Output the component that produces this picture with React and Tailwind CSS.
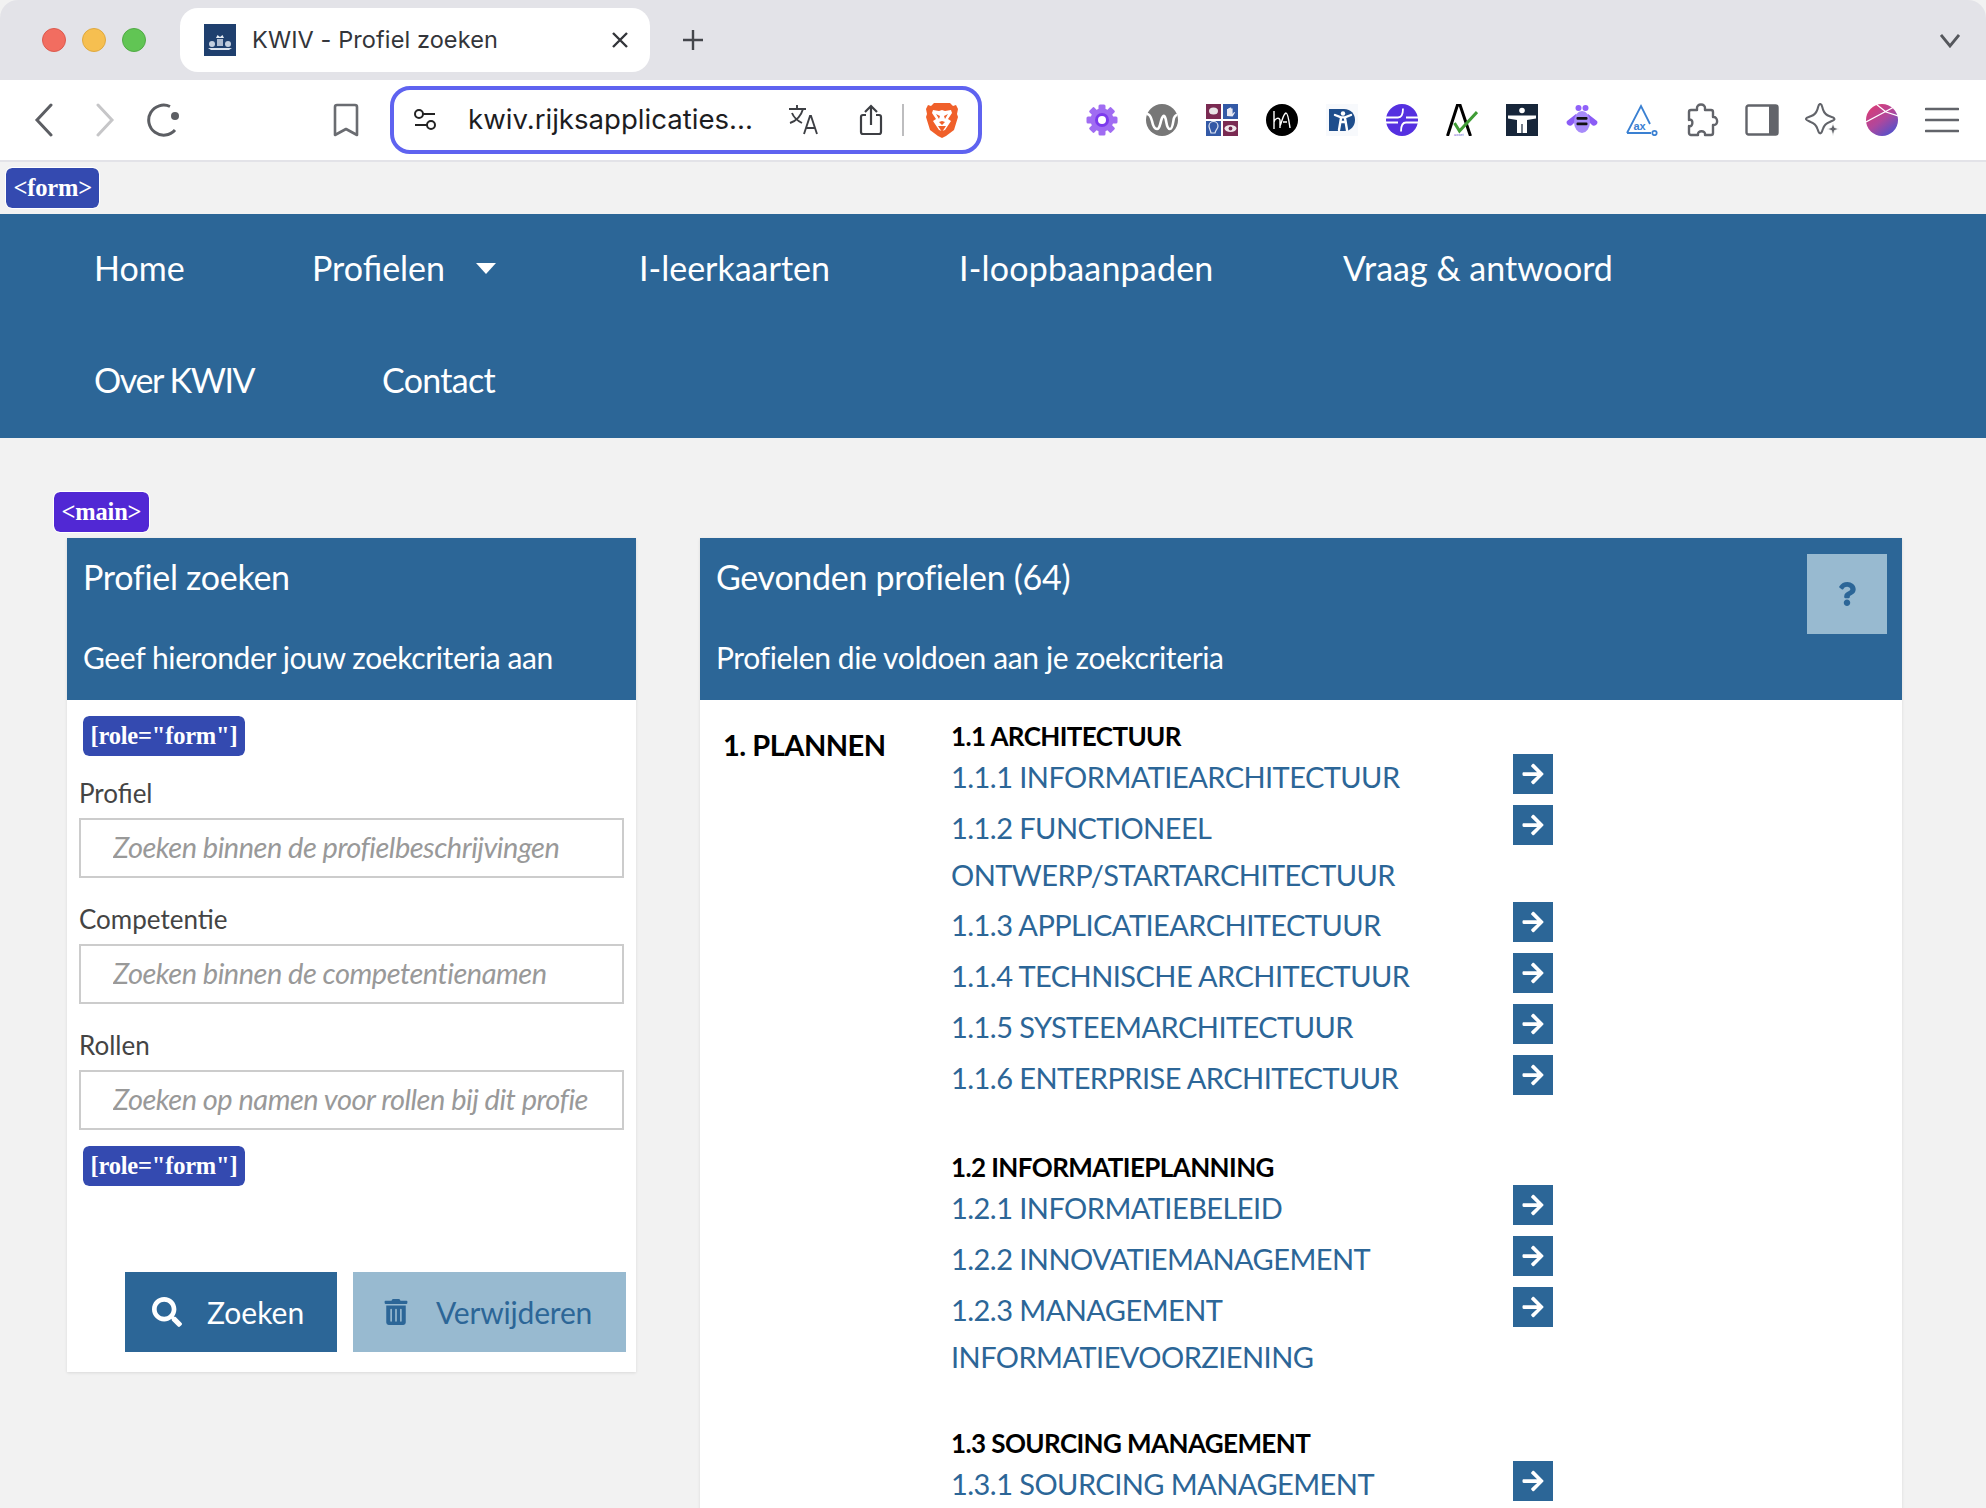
import React from "react";
import { FaArrowRight, FaSearch, FaTrashAlt, FaQuestion } from "react-icons/fa";

function Gear() {
  return (
    <svg width="32" height="32" viewBox="0 0 32 32">
      {[0, 45, 90, 135].map((a) => (
        <rect key={a} x="12.5" y="0.5" width="7" height="31" rx="1.5" fill="#a06cf2" transform={`rotate(${a} 16 16)`} />
      ))}
      <circle cx="16" cy="16" r="11.5" fill="#a06cf2" />
      <circle cx="16" cy="16" r="7" fill="#7c3aed" />
      <circle cx="16" cy="16" r="4" fill="#fff" />
    </svg>
  );
}

function WaveLogo() {
  return (
    <svg width="32" height="32" viewBox="0 0 32 32">
      <circle cx="16" cy="16" r="16" fill="#777" />
      <path d="M1 10c3 0 4 3 5 7 1 5 3 8 5 8 3 0 3-6 5-11 1-2 2-3 3-1 2 4 1 12 5 12 3 0 3-8 4-11 1-2 2-3 3-3" fill="none" stroke="#fff" strokeWidth="2.6" />
    </svg>
  );
}

function QuadLogo() {
  return (
    <svg width="32" height="32" viewBox="0 0 32 32">
      <rect x="0" y="0" width="15" height="15" fill="#7a2a52" />
      <rect x="17" y="0" width="15" height="15" fill="#3359a6" />
      <rect x="0" y="17" width="15" height="15" fill="#3359a6" />
      <rect x="17" y="17" width="15" height="15" fill="#7a2a52" />
      <ellipse cx="7.5" cy="7" rx="4.5" ry="3.5" fill="#e8e4e6" />
      <path d="M21 12V5h1.4v3-4h1.4v4-4.5h1.4V8 4.5h1.4V10l1.5-2 1 .5-2.5 4z" fill="#e8e8f2" />
      <path d="M5 29c-1-4-2-5-2-7a4.5 4.5 0 0 1 9 0c0 3-2 3-3 7z" fill="none" stroke="#dfe5f2" strokeWidth="1.2" />
      <ellipse cx="24.5" cy="24.5" rx="6" ry="3.4" fill="#f0e6ea" />
      <circle cx="24.5" cy="24.5" r="1.9" fill="#7a2a52" />
    </svg>
  );
}

function HaLogo() {
  return (
    <svg width="32" height="32" viewBox="0 0 32 32">
      <circle cx="16" cy="16" r="16" fill="#000" />
      <path d="M8 7v18M8 18c1-4 5-5 6-2v8M14 22c2-4 3-12 6-13 2 0 3 8 4 15M17 18h4" fill="none" stroke="#fff" strokeWidth="1.4" />
    </svg>
  );
}

function DLogo() {
  return (
    <svg width="32" height="32" viewBox="0 0 32 32">
      <rect width="32" height="32" fill="#f7f9fc" />
      <path d="M3 5h15c7 0 11 5 11 11s-4 11-11 11H3z" fill="#1f4e8c" />
      <circle cx="17" cy="9.5" r="2.2" fill="#fff" />
      <path d="M9 11l6 2.4h4l6-2.4M15 14l-2 12M19 14l2 12M15 18h4" fill="none" stroke="#fff" strokeWidth="2.4" strokeLinecap="round" />
    </svg>
  );
}

function PlanetLogo() {
  return (
    <svg width="32" height="32" viewBox="0 0 32 32">
      <circle cx="16" cy="16" r="16" fill="#5530e0" />
      <path d="M0 13.5h12c4 0 5-3 5-9M32 18.500H20c-4 0-5 3-5 9M0 18.500h12M20 13.500h12" fill="none" stroke="#fff" strokeWidth="1.8" />
    </svg>
  );
}

function ACheck() {
  return (
    <svg width="32" height="32" viewBox="0 0 32 32">
      <path d="M1.500 32L11.500 1h2.500L24.500 32" fill="none" stroke="#000" strokeWidth="3" />
      <path d="M8.500 19l5 8L31 8" fill="none" stroke="#3f9c35" strokeWidth="3" />
      <text x="8" y="31.500" fontSize="4" fill="#6b5bd2" fontFamily="Liberation Sans, sans-serif">asset</text>
    </svg>
  );
}

function BodyLogo() {
  return (
    <svg width="32" height="32" viewBox="0 0 32 32">
      <rect width="32" height="32" fill="#17263a" />
      <circle cx="16" cy="6.500" r="2.800" fill="#fff" />
      <path d="M2 11.500h28v3L21 16v13h-4.400V20h-1.200v9H11V16l-9-1.500z" fill="#fff" />
    </svg>
  );
}

function Bee() {
  return (
    <svg width="32" height="32" viewBox="0 0 32 32">
      <circle cx="12.500" cy="4" r="3" fill="#9061f9" />
      <circle cx="19.500" cy="4" r="3" fill="#9061f9" />
      <path d="M10 10L1 17c-2 3 3 6 5 4l5-5zM22 10l9 7c2 3-3 6-5 4l-5-5z" fill="#8b5cf6" />
      <ellipse cx="16" cy="18" rx="8" ry="11" fill="#a78bfa" />
      <rect x="10.500" y="13" width="11" height="2.800" rx="1" fill="#111" />
      <rect x="10.500" y="18.500" width="11" height="2.800" rx="1" fill="#111" />
    </svg>
  );
}

function AxLogo() {
  return (
    <svg width="32" height="32" viewBox="0 0 32 32">
      <path d="M1 29L15 2l9 18M1 29h24" fill="none" stroke="#3a80d2" strokeWidth="1.800" />
      <circle cx="28.500" cy="29" r="2.200" fill="none" stroke="#3a80d2" strokeWidth="1.800" />
      <text x="7.500" y="26" fontSize="11" fontWeight="700" fill="#3a80d2" fontFamily="Liberation Sans, sans-serif">ax</text>
    </svg>
  );
}

function Puzzle() {
  return (
    <svg width="34" height="34" viewBox="0 0 34 34">
      <path d="M12 6c-1-6 9-6 8 0v1h6c1 0 2 1 2 2v5c5-1 6 9 0 8v8c0 1-1 2-2 2h-6c1-5-8-5-7 0H6c-1 0-2-1-2-2v-7c4 2 5-8 0-6V9c0-1 1-2 2-2h6z" fill="none" stroke="#62646a" strokeWidth="2.400" strokeLinejoin="round" />
    </svg>
  );
}

function SidePanel() {
  return (
    <svg width="34" height="32" viewBox="0 0 34 32">
      <rect x="1.500" y="1.500" width="31" height="29" rx="2" fill="#fff" stroke="#62646a" strokeWidth="2.400" />
      <rect x="24" y="1.500" width="8.500" height="29" fill="#62646a" />
    </svg>
  );
}

function Sparkle() {
  return (
    <svg width="34" height="34" viewBox="0 0 34 34">
      <path d="M16 1c2 0 2 3 3 6 1 3 4 6 7 7 2 1 5 1 5 3 0 1-3 2-5 3-3 1-6 4-7 7-1 2-1 5-3 5s-2-3-3-5c-1-3-4-6-7-7-2-1-5-2-5-3 0-2 3-2 5-3 3-1 6-4 7-7 1-3 1-6 3-6z" fill="none" stroke="#62646a" strokeWidth="2.200" transform="scale(0.95)" />
      <path d="M28 20l1.500 4.500L34 26l-4.500 1.500L28 33l-1.500-5.500L22 26l4.500-1.500z" fill="#62646a" stroke="#fff" strokeWidth="0.800" />
    </svg>
  );
}

function ColorBall() {
  return (
    <svg width="32" height="32" viewBox="0 0 32 32">
      <defs>
        <linearGradient id="ball" x1="0.200" y1="0.100" x2="0.800" y2="0.900">
          <stop offset="0" stopColor="#d43d7a" />
          <stop offset="0.500" stopColor="#b0479c" />
          <stop offset="1" stopColor="#5a50c8" />
        </linearGradient>
      </defs>
      <circle cx="16" cy="16" r="16" fill="url(#ball)" />
      <path d="M10 0l10 8 12 4M28 3L0 18" fill="none" stroke="#fff" strokeWidth="1.300" />
    </svg>
  );
}

function Hamburger() {
  return (
    <svg width="34" height="28" viewBox="0 0 34 28">
      <path d="M1 3h32M1 14h32M1 25h32" stroke="#62646a" strokeWidth="2.600" strokeLinecap="round" />
    </svg>
  );
}

function Crest() {
  return (
    <svg width="32" height="32" viewBox="0 0 32 32">
      <rect width="32" height="32" fill="#1f3f6e" />
      <path d="M12 14l1.500-3 2.500 2 2.500-2 1.500 3z" fill="#e6ebf3" />
      <rect x="13" y="15" width="6" height="7" fill="#aebbd0" />
      <circle cx="8" cy="20" r="3" fill="#c4cfdf" />
      <circle cx="24" cy="20" r="3" fill="#c4cfdf" />
      <path d="M4 24h24l-3 2H7z" fill="#dce3ee" />
    </svg>
  );
}

function BraveLion() {
  return (
    <svg width="32" height="36" viewBox="0 0 32 36">
      <path d="M8 1h16l3 3 3-1 2 4-1 5 1 3-4 13-8 6-4 2-4-2-8-6L0 15l1-3-1-5 2-4 3 1z" fill="#f0602a" />
      <path d="M7 8l6 1 3-1 3 1 6-1 1 3-4 6 3 2-6 9-3 1-3-1-6-9 3-2-4-6z" fill="#fff" />
      <path d="M10 12l4 2-1 3zM22 12l-4 2 1 3zM13 20l3-1 3 1-3 3zM16 23v5M12 24l4 6 4-6z" fill="#f0602a" />
    </svg>
  );
}

const extensionIcons = [Gear, WaveLogo, QuadLogo, HaLogo, DLogo, PlanetLogo, ACheck, BodyLogo, Bee, AxLogo, Puzzle, SidePanel, Sparkle, ColorBall, Hamburger];

function BrowserChrome() {
  return (
    <div className="font-[Inter,sans-serif]">
      {/* tabs */}
      <div className="h-[80px] bg-[#e3e3e8] rounded-t-[18px] flex items-start pl-[42px] pr-[26px]">
        <div className="flex gap-[16px] mt-[28px]">
          <span className="w-[24px] h-[24px] rounded-full bg-[#f26d60] border border-[#dc5a4e]" />
          <span className="w-[24px] h-[24px] rounded-full bg-[#f6bf50] border border-[#dfa93f]" />
          <span className="w-[24px] h-[24px] rounded-full bg-[#61c554] border border-[#51ab45]" />
        </div>
        <div className="ml-[34px] mt-[8px] w-[470px] h-[64px] bg-white rounded-[18px] flex items-center pl-[24px] pr-[21px]">
          <Crest />
          <span className="ml-[16px] text-[23.5px] text-[#33353a] tracking-[0.1px] whitespace-nowrap">KWIV - Profiel zoeken</span>
          <svg className="ml-auto" width="18" height="18" viewBox="0 0 18 18"><path d="M2 2l14 14M16 2L2 16" stroke="#33353a" strokeWidth="2.400" /></svg>
        </div>
        <svg className="ml-[31px] mt-[28px]" width="24" height="24" viewBox="0 0 24 24"><path d="M12 2v20M2 12h20" stroke="#44464b" strokeWidth="2.400" /></svg>
        <svg className="ml-auto mt-[34px]" width="20" height="14" viewBox="0 0 20 14"><path d="M1 1l9 11 9-11" fill="none" stroke="#55575c" strokeWidth="2.800" /></svg>
      </div>
      {/* toolbar */}
      <div className="h-[82px] bg-white border-b-2 border-[#e3e3e8] flex items-center">
        <svg className="ml-[33px]" width="22" height="34" viewBox="0 0 22 34"><path d="M18 2L4 17l14 15" fill="none" stroke="#5c5e63" strokeWidth="3" strokeLinecap="round" /></svg>
        <svg className="ml-[39px]" width="22" height="34" viewBox="0 0 22 34"><path d="M4 2l14 15L4 32" fill="none" stroke="#c6c6c8" strokeWidth="3" strokeLinecap="round" /></svg>
        <svg className="ml-[30px]" width="36" height="34" viewBox="0 0 36 34"><path d="M29 27A15 15 0 1 1 24 3.500" fill="none" stroke="#5c5e63" strokeWidth="3" /><circle cx="29" cy="13" r="4" fill="#5c5e63" /></svg>
        <svg className="ml-[151px]" width="26" height="34" viewBox="0 0 26 34"><path d="M2 4a2 2 0 0 1 2-2h18a2 2 0 0 1 2 2v28l-11-6-11 6z" fill="none" stroke="#6a6c71" strokeWidth="2.600" strokeLinejoin="round" /></svg>
        <div className="ml-[31px] w-[592px] h-[68px] rounded-[20px] border-[4px] border-[#5f63f0] flex items-center pl-[19px] pr-[20px]">
          <svg width="24" height="24" viewBox="0 0 24 24"><g fill="none" stroke="#222" strokeWidth="2"><circle cx="6" cy="6" r="4" /><path d="M10 6h12M2 17h12" /><circle cx="18" cy="17" r="4" /></g></svg>
          <span className="ml-[31px] text-[27.6px] text-[#1d1d1f] whitespace-nowrap">kwiv.rijksapplicaties...</span>
          <svg className="ml-[35px]" width="32" height="32" viewBox="0 0 32 32"><path d="M1 5h17M9 1v4M15 5c-2 7-7 12-13 14M4 9c2 5 6 8 10 10M16 30l6-18h1l6 18M18.500 24h9" fill="none" stroke="#3d3f44" strokeWidth="1.900" /></svg>
          <svg className="ml-[39px]" width="24" height="32" viewBox="0 0 24 32"><path d="M7 11H4a2 2 0 0 0-2 2v15a2 2 0 0 0 2 2h16a2 2 0 0 0 2-2V13a2 2 0 0 0-2-2h-3M12 21V2M6 8l6-6 6 6" fill="none" stroke="#3d3f44" strokeWidth="2.200" /></svg>
          <span className="ml-[19px] w-[2px] h-[32px] bg-[#bdbdbf]" />
          <span className="ml-[22px] flex"><BraveLion /></span>
        </div>
        <div className="ml-auto flex pr-[14px]">
          {extensionIcons.map((Icon, i) => (
            <span key={i} className="w-[60px] h-[36px] flex items-center justify-center"><Icon /></span>
          ))}
        </div>
      </div>
    </div>
  );
}

function TagBadge({ children, color = "bg-[#344ab0]" }) {
  return (
    <span className={`inline-flex items-center h-[40px] px-[7.5px] rounded-[6px] ${color} text-white font-bold text-[24.5px] tracking-[-0.2px] whitespace-nowrap font-['Liberation_Serif',serif] outline outline-1 outline-white`}>
      {children}
    </span>
  );
}

const navRows = [
  { label: "Home", w: "w-[218px]" },
  { label: "Profielen", w: "w-[327px]", caret: true },
  { label: "I-leerkaarten", w: "w-[320px]" },
  { label: "I-loopbaanpaden", w: "w-[384px] tracking-[0.2px]" },
  { label: "Vraag & antwoord", w: "w-[400px]" },
  { label: "Over KWIV", w: "w-[288px] tracking-[-1.400px]" },
  { label: "Contact", w: "w-[200px] tracking-[-0.700px]" },
];

function Nav() {
  return (
    <nav className="mt-[52px] h-[224px] bg-[#2c6697] pl-[94px] pr-[200px] flex flex-wrap text-white text-[34px]">
      {navRows.map((n) => (
        <a key={n.label} className={`${n.w} h-[112px] pb-[5px] flex items-center`}>
          {n.label}
          {n.caret && <span className="ml-[31px] mt-[2px] w-0 h-0 border-x-[10px] border-x-transparent border-t-[11px] border-t-white" />}
        </a>
      ))}
    </nav>
  );
}

function Field({ label, placeholder, top }) {
  return (
    <div className={top}>
      <label className="block h-[40px] leading-[40px] text-[26px] text-[#444]">{label}</label>
      <input
        readOnly
        placeholder={placeholder}
        className="mt-[5px] block w-[545px] h-[60px] border-2 border-[#ccc] bg-white pl-[32px] pb-[4px] text-[29px] tracking-[-0.5px] italic placeholder:text-[#999] outline-none"
      />
    </div>
  );
}

function PanelHeading({ title, subtitle }) {
  return (
    <div>
      <h2 className="pt-[14px] h-[97px] leading-[50px] text-[34px] tracking-[-0.3px]">{title}</h2>
      <p className="leading-[44px] text-[30px] tracking-[-0.38px]">{subtitle}</p>
    </div>
  );
}

function SearchPanel() {
  return (
    <section className="w-[569px] shrink-0 self-start bg-white shadow-[0_1px_3px_rgba(0,0,0,0.1)] pb-[20px]">
      <header className="h-[162px] bg-[#2c6697] text-white pl-[16px]">
        <PanelHeading title="Profiel zoeken" subtitle="Geef hieronder jouw zoekcriteria aan" />
      </header>
      <div className="pl-[16px] pt-[16px]"><TagBadge>[role="form"]</TagBadge></div>
      <div className="pl-[12px]">
        <Field label="Profiel" placeholder="Zoeken binnen de profielbeschrijvingen" top="mt-[17px]" />
        <Field label="Competentie" placeholder="Zoeken binnen de competentienamen" top="mt-[21px]" />
        <Field label="Rollen" placeholder="Zoeken op namen voor rollen bij dit profie" top="mt-[21px]" />
      </div>
      <div className="pl-[16px] pt-[16px]"><TagBadge>[role="form"]</TagBadge></div>
      <div className="mt-[86px] flex justify-end gap-[16px] pr-[10px]">
        <button className="w-[212px] h-[80px] bg-[#2c6697] text-white text-[30px] flex items-center pl-[27px]">
          <FaSearch size={30} />
          <span className="ml-[25px]">Zoeken</span>
        </button>
        <button className="w-[273px] h-[80px] bg-[#98bad0] text-[#2c6697] text-[30px] tracking-[-0.2px] flex items-center pl-[30px]">
          <FaTrashAlt size={26} />
          <span className="ml-[27px]">Verwijderen</span>
        </button>
      </div>
    </section>
  );
}

const groups = [
  {
    title: "1.1 ARCHITECTUUR",
    items: ["1.1.1 INFORMATIEARCHITECTUUR", "1.1.2 FUNCTIONEEL ONTWERP/STARTARCHITECTUUR", "1.1.3 APPLICATIEARCHITECTUUR", "1.1.4 TECHNISCHE ARCHITECTUUR", "1.1.5 SYSTEEMARCHITECTUUR", "1.1.6 ENTERPRISE ARCHITECTUUR"],
    gap: "mb-[43px]",
  },
  {
    title: "1.2 INFORMATIEPLANNING",
    items: ["1.2.1 INFORMATIEBELEID", "1.2.2 INNOVATIEMANAGEMENT", "1.2.3 MANAGEMENT INFORMATIEVOORZIENING"],
    gap: "mb-[41px]",
  },
  {
    title: "1.3 SOURCING MANAGEMENT",
    items: ["1.3.1 SOURCING MANAGEMENT"],
    gap: "",
  },
];

function ResultsPanel() {
  return (
    <section className="w-[1202px] shrink-0 h-[1000px] bg-white shadow-[0_1px_3px_rgba(0,0,0,0.1)]">
      <header className="h-[162px] bg-[#2c6697] text-white pl-[16px] pr-[15px] flex justify-between">
        <PanelHeading title="Gevonden profielen (64)" subtitle="Profielen die voldoen aan je zoekcriteria" />
        <button className="mt-[16px] w-[80px] h-[80px] bg-[#98bad0] text-[#2c6697] flex items-center justify-center">
          <FaQuestion size={24} />
        </button>
      </header>
      <div className="flex pt-[18px]">
        <h3 className="w-[251px] pl-[23px] text-[29px] tracking-[-0.5px] font-bold text-black leading-[54px] shrink-0">1. PLANNEN</h3>
        <div>
          {groups.map((g) => (
            <div key={g.title} className={g.gap}>
              <h4 className="h-[36px] leading-[36px] text-[26px] tracking-[-0.6px] font-bold text-black">{g.title}</h4>
              {g.items.map((it) => (
                <div key={it} className="flex min-h-[51px]">
                  <a className="w-[562px] pb-[4px] text-[29px] leading-[46.5px] text-[#2c6697] tracking-[-0.55px]">{it}</a>
                  <span className="w-[40px] h-[40px] bg-[#2c6697] text-white flex items-center justify-center">
                    <FaArrowRight size={24} />
                  </span>
                </div>
              ))}
            </div>
          ))}
        </div>
      </div>
    </section>
  );
}

export default function App() {
  return (
    <div className="h-[1508px] overflow-hidden bg-[#f2f2f2] font-[Lato,sans-serif] relative">
      <BrowserChrome />
      <div className="absolute left-[6px] top-[168px]"><TagBadge>&lt;form&gt;</TagBadge></div>
      <Nav />
      <main className="pt-[54px] pl-[54px]">
        <TagBadge color="bg-[#5128d4]">&lt;main&gt;</TagBadge>
        <div className="mt-[6px] ml-[13px] flex gap-[64px]">
          <SearchPanel />
          <ResultsPanel />
        </div>
      </main>
    </div>
  );
}
